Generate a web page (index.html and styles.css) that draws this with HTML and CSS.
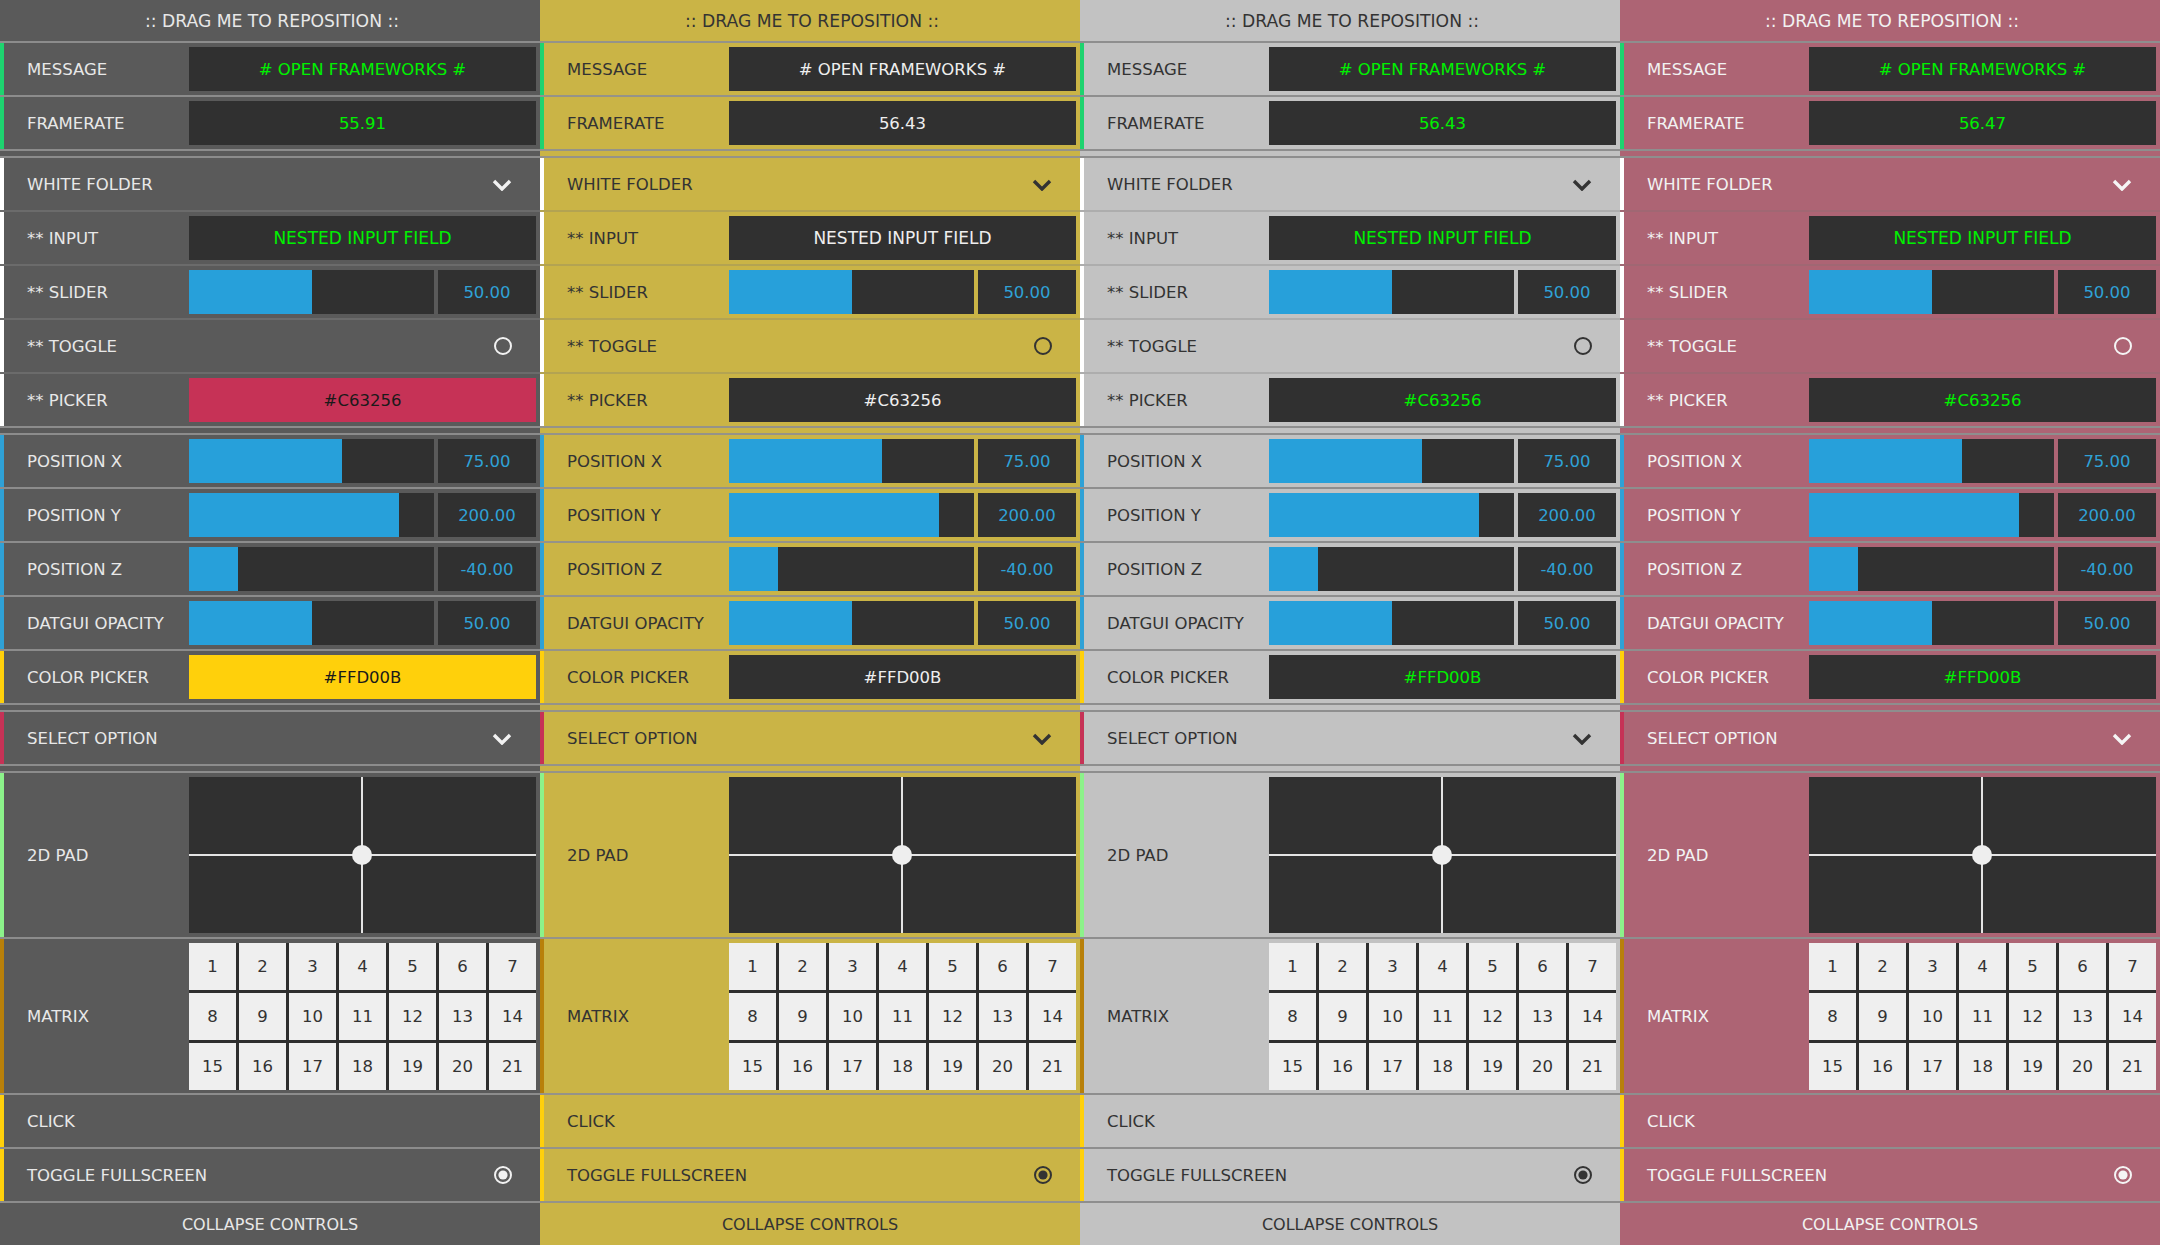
FILE: index.html
```html
<!DOCTYPE html>
<html>
<head>
<meta charset="utf-8">
<link rel="stylesheet" href="styles.css">
</head>
<body>
<div class="desk">

<!-- PANEL 1 -->
<div class="gui t1">
  <div class="hdr">:: DRAG ME TO REPOSITION ::</div>
  <div class="group">
    <div class="row s-green"><span class="lbl">MESSAGE</span><div class="box">#&nbsp;OPEN FRAMEWORKS #</div></div>
    <div class="row s-green"><span class="lbl">FRAMERATE</span><div class="box">55.91</div></div>
  </div>
  <div class="group folder">
    <div class="row s-white"><span class="lbl">WHITE FOLDER</span><svg class="ico chev" viewBox="0 0 20 12"><polyline points="2,2 10,10 18,2"/></svg></div>
    <div class="row s-white"><span class="lbl">** INPUT</span><div class="box wide">NESTED INPUT FIELD</div></div>
    <div class="row s-white"><span class="lbl">** SLIDER</span><div class="track"><div class="fill" style="width:50%"></div></div><div class="num">50.00</div></div>
    <div class="row s-white"><span class="lbl">** TOGGLE</span><svg class="ico tog" viewBox="0 0 20 20"><circle cx="10" cy="10" r="8"/></svg></div>
    <div class="row s-white"><span class="lbl">** PICKER</span><div class="box pick-red">#C63256</div></div>
  </div>
  <div class="group">
    <div class="row s-blue"><span class="lbl">POSITION X</span><div class="track"><div class="fill" style="width:62.4%"></div></div><div class="num">75.00</div></div>
    <div class="row s-blue"><span class="lbl">POSITION Y</span><div class="track"><div class="fill" style="width:85.7%"></div></div><div class="num">200.00</div></div>
    <div class="row s-blue"><span class="lbl">POSITION Z</span><div class="track"><div class="fill" style="width:19.8%"></div></div><div class="num">-40.00</div></div>
    <div class="row s-blue"><span class="lbl">DATGUI OPACITY</span><div class="track"><div class="fill" style="width:50%"></div></div><div class="num">50.00</div></div>
    <div class="row s-yellow"><span class="lbl">COLOR PICKER</span><div class="box pick-yel">#FFD00B</div></div>
  </div>
  <div class="group">
    <div class="row s-crimson"><span class="lbl">SELECT OPTION</span><svg class="ico chev" viewBox="0 0 20 12"><polyline points="2,2 10,10 18,2"/></svg></div>
  </div>
  <div class="group">
    <div class="row pad-row s-lime"><span class="lbl">2D PAD</span><div class="pad"><div class="hl"></div><div class="vl"></div><div class="dot"></div></div></div>
    <div class="row mat-row s-amber"><span class="lbl">MATRIX</span>
      <div class="matrix"><div>1</div><div>2</div><div>3</div><div>4</div><div>5</div><div>6</div><div>7</div><div>8</div><div>9</div><div>10</div><div>11</div><div>12</div><div>13</div><div>14</div><div>15</div><div>16</div><div>17</div><div>18</div><div>19</div><div>20</div><div>21</div></div>
    </div>
    <div class="row s-yellow"><span class="lbl">CLICK</span></div>
    <div class="row s-yellow"><span class="lbl">TOGGLE FULLSCREEN</span><svg class="ico tog" viewBox="0 0 20 20"><circle cx="10" cy="10" r="8"/><circle class="in" cx="10" cy="10" r="4.6"/></svg></div>
  </div>
  <div class="ftr">COLLAPSE CONTROLS</div>
</div>

<!-- PANEL 2 -->
<div class="gui t2">
  <div class="hdr">:: DRAG ME TO REPOSITION ::</div>
  <div class="group">
    <div class="row s-green"><span class="lbl">MESSAGE</span><div class="box">#&nbsp;OPEN FRAMEWORKS #</div></div>
    <div class="row s-green"><span class="lbl">FRAMERATE</span><div class="box">56.43</div></div>
  </div>
  <div class="group folder">
    <div class="row s-white"><span class="lbl">WHITE FOLDER</span><svg class="ico chev" viewBox="0 0 20 12"><polyline points="2,2 10,10 18,2"/></svg></div>
    <div class="row s-white"><span class="lbl">** INPUT</span><div class="box wide">NESTED INPUT FIELD</div></div>
    <div class="row s-white"><span class="lbl">** SLIDER</span><div class="track"><div class="fill" style="width:50%"></div></div><div class="num">50.00</div></div>
    <div class="row s-white"><span class="lbl">** TOGGLE</span><svg class="ico tog" viewBox="0 0 20 20"><circle cx="10" cy="10" r="8"/></svg></div>
    <div class="row s-white"><span class="lbl">** PICKER</span><div class="box">#C63256</div></div>
  </div>
  <div class="group">
    <div class="row s-blue"><span class="lbl">POSITION X</span><div class="track"><div class="fill" style="width:62.4%"></div></div><div class="num">75.00</div></div>
    <div class="row s-blue"><span class="lbl">POSITION Y</span><div class="track"><div class="fill" style="width:85.7%"></div></div><div class="num">200.00</div></div>
    <div class="row s-blue"><span class="lbl">POSITION Z</span><div class="track"><div class="fill" style="width:19.8%"></div></div><div class="num">-40.00</div></div>
    <div class="row s-blue"><span class="lbl">DATGUI OPACITY</span><div class="track"><div class="fill" style="width:50%"></div></div><div class="num">50.00</div></div>
    <div class="row s-yellow"><span class="lbl">COLOR PICKER</span><div class="box">#FFD00B</div></div>
  </div>
  <div class="group">
    <div class="row s-crimson"><span class="lbl">SELECT OPTION</span><svg class="ico chev" viewBox="0 0 20 12"><polyline points="2,2 10,10 18,2"/></svg></div>
  </div>
  <div class="group">
    <div class="row pad-row s-lime"><span class="lbl">2D PAD</span><div class="pad"><div class="hl"></div><div class="vl"></div><div class="dot"></div></div></div>
    <div class="row mat-row s-amber"><span class="lbl">MATRIX</span>
      <div class="matrix"><div>1</div><div>2</div><div>3</div><div>4</div><div>5</div><div>6</div><div>7</div><div>8</div><div>9</div><div>10</div><div>11</div><div>12</div><div>13</div><div>14</div><div>15</div><div>16</div><div>17</div><div>18</div><div>19</div><div>20</div><div>21</div></div>
    </div>
    <div class="row s-yellow"><span class="lbl">CLICK</span></div>
    <div class="row s-yellow"><span class="lbl">TOGGLE FULLSCREEN</span><svg class="ico tog" viewBox="0 0 20 20"><circle cx="10" cy="10" r="8"/><circle class="in" cx="10" cy="10" r="4.6"/></svg></div>
  </div>
  <div class="ftr">COLLAPSE CONTROLS</div>
</div>

<!-- PANEL 3 -->
<div class="gui t3">
  <div class="hdr">:: DRAG ME TO REPOSITION ::</div>
  <div class="group">
    <div class="row s-green"><span class="lbl">MESSAGE</span><div class="box">#&nbsp;OPEN FRAMEWORKS #</div></div>
    <div class="row s-green"><span class="lbl">FRAMERATE</span><div class="box">56.43</div></div>
  </div>
  <div class="group folder">
    <div class="row s-white"><span class="lbl">WHITE FOLDER</span><svg class="ico chev" viewBox="0 0 20 12"><polyline points="2,2 10,10 18,2"/></svg></div>
    <div class="row s-white"><span class="lbl">** INPUT</span><div class="box wide">NESTED INPUT FIELD</div></div>
    <div class="row s-white"><span class="lbl">** SLIDER</span><div class="track"><div class="fill" style="width:50%"></div></div><div class="num">50.00</div></div>
    <div class="row s-white"><span class="lbl">** TOGGLE</span><svg class="ico tog" viewBox="0 0 20 20"><circle cx="10" cy="10" r="8"/></svg></div>
    <div class="row s-white"><span class="lbl">** PICKER</span><div class="box">#C63256</div></div>
  </div>
  <div class="group">
    <div class="row s-blue"><span class="lbl">POSITION X</span><div class="track"><div class="fill" style="width:62.4%"></div></div><div class="num">75.00</div></div>
    <div class="row s-blue"><span class="lbl">POSITION Y</span><div class="track"><div class="fill" style="width:85.7%"></div></div><div class="num">200.00</div></div>
    <div class="row s-blue"><span class="lbl">POSITION Z</span><div class="track"><div class="fill" style="width:19.8%"></div></div><div class="num">-40.00</div></div>
    <div class="row s-blue"><span class="lbl">DATGUI OPACITY</span><div class="track"><div class="fill" style="width:50%"></div></div><div class="num">50.00</div></div>
    <div class="row s-yellow"><span class="lbl">COLOR PICKER</span><div class="box">#FFD00B</div></div>
  </div>
  <div class="group">
    <div class="row s-crimson"><span class="lbl">SELECT OPTION</span><svg class="ico chev" viewBox="0 0 20 12"><polyline points="2,2 10,10 18,2"/></svg></div>
  </div>
  <div class="group">
    <div class="row pad-row s-lime"><span class="lbl">2D PAD</span><div class="pad"><div class="hl"></div><div class="vl"></div><div class="dot"></div></div></div>
    <div class="row mat-row s-amber"><span class="lbl">MATRIX</span>
      <div class="matrix"><div>1</div><div>2</div><div>3</div><div>4</div><div>5</div><div>6</div><div>7</div><div>8</div><div>9</div><div>10</div><div>11</div><div>12</div><div>13</div><div>14</div><div>15</div><div>16</div><div>17</div><div>18</div><div>19</div><div>20</div><div>21</div></div>
    </div>
    <div class="row s-yellow"><span class="lbl">CLICK</span></div>
    <div class="row s-yellow"><span class="lbl">TOGGLE FULLSCREEN</span><svg class="ico tog" viewBox="0 0 20 20"><circle cx="10" cy="10" r="8"/><circle class="in" cx="10" cy="10" r="4.6"/></svg></div>
  </div>
  <div class="ftr">COLLAPSE CONTROLS</div>
</div>

<!-- PANEL 4 -->
<div class="gui t4">
  <div class="hdr">:: DRAG ME TO REPOSITION ::</div>
  <div class="group">
    <div class="row s-green"><span class="lbl">MESSAGE</span><div class="box">#&nbsp;OPEN FRAMEWORKS #</div></div>
    <div class="row s-green"><span class="lbl">FRAMERATE</span><div class="box">56.47</div></div>
  </div>
  <div class="group folder">
    <div class="row s-white"><span class="lbl">WHITE FOLDER</span><svg class="ico chev" viewBox="0 0 20 12"><polyline points="2,2 10,10 18,2"/></svg></div>
    <div class="row s-white"><span class="lbl">** INPUT</span><div class="box wide">NESTED INPUT FIELD</div></div>
    <div class="row s-white"><span class="lbl">** SLIDER</span><div class="track"><div class="fill" style="width:50%"></div></div><div class="num">50.00</div></div>
    <div class="row s-white"><span class="lbl">** TOGGLE</span><svg class="ico tog" viewBox="0 0 20 20"><circle cx="10" cy="10" r="8"/></svg></div>
    <div class="row s-white"><span class="lbl">** PICKER</span><div class="box">#C63256</div></div>
  </div>
  <div class="group">
    <div class="row s-blue"><span class="lbl">POSITION X</span><div class="track"><div class="fill" style="width:62.4%"></div></div><div class="num">75.00</div></div>
    <div class="row s-blue"><span class="lbl">POSITION Y</span><div class="track"><div class="fill" style="width:85.7%"></div></div><div class="num">200.00</div></div>
    <div class="row s-blue"><span class="lbl">POSITION Z</span><div class="track"><div class="fill" style="width:19.8%"></div></div><div class="num">-40.00</div></div>
    <div class="row s-blue"><span class="lbl">DATGUI OPACITY</span><div class="track"><div class="fill" style="width:50%"></div></div><div class="num">50.00</div></div>
    <div class="row s-yellow"><span class="lbl">COLOR PICKER</span><div class="box">#FFD00B</div></div>
  </div>
  <div class="group">
    <div class="row s-crimson"><span class="lbl">SELECT OPTION</span><svg class="ico chev" viewBox="0 0 20 12"><polyline points="2,2 10,10 18,2"/></svg></div>
  </div>
  <div class="group">
    <div class="row pad-row s-lime"><span class="lbl">2D PAD</span><div class="pad"><div class="hl"></div><div class="vl"></div><div class="dot"></div></div></div>
    <div class="row mat-row s-amber"><span class="lbl">MATRIX</span>
      <div class="matrix"><div>1</div><div>2</div><div>3</div><div>4</div><div>5</div><div>6</div><div>7</div><div>8</div><div>9</div><div>10</div><div>11</div><div>12</div><div>13</div><div>14</div><div>15</div><div>16</div><div>17</div><div>18</div><div>19</div><div>20</div><div>21</div></div>
    </div>
    <div class="row s-yellow"><span class="lbl">CLICK</span></div>
    <div class="row s-yellow"><span class="lbl">TOGGLE FULLSCREEN</span><svg class="ico tog" viewBox="0 0 20 20"><circle cx="10" cy="10" r="8"/><circle class="in" cx="10" cy="10" r="4.6"/></svg></div>
  </div>
  <div class="ftr">COLLAPSE CONTROLS</div>
</div>

</div>
</body>
</html>
```

FILE: styles.css
```css
html, body {
  margin: 0;
  padding: 0;
}
body {
  width: 2160px;
  height: 1245px;
  overflow: hidden;
  font-family: "DejaVu Sans", Verdana, sans-serif;
  font-size: 16.5px;
}
.desk {
  display: flex;
  width: 2160px;
  height: 1245px;
}

/* themes */
.t1 { --bg: #5a5a5a; --fg: #e8e8e8; --line: #8c8c8c; --line2: #6b6b6b; --box: #303030; --val: #00f000; --ico: #f2f2f2; }
.t2 { --bg: #cab446; --fg: #333333; --line: #959389; --line2: #b3a352; --box: #303030; --val: #eeeeee; --ico: #333333; }
.t3 { --bg: #c2c2c2; --fg: #333333; --line: #8e8e8e; --line2: #adadad; --box: #303030; --val: #00f000; --ico: #333333; }
.t4 { --bg: #ad6474; --fg: #f2f2f2; --line: #8e8e8e; --line2: #a06773; --box: #303030; --val: #00f000; --ico: #f5f5f5; }

.gui {
  width: 540px;
  height: 1245px;
  display: flex;
  flex-direction: column;
  background: var(--bg);
  color: var(--fg);
  flex: none;
}
.hdr {
  height: 41px;
  display: flex;
  align-items: center;
  justify-content: center;
  font-size: 17.2px;
  padding-left: 4px;
}
.ftr {
  flex: 1;
  display: flex;
  align-items: center;
  justify-content: center;
  font-size: 16px;
}
.group {
  border-top: 2px solid var(--line);
}
.group + .group {
  margin-top: 5px;
}
.row {
  height: 52px;
  border-bottom: 2px solid var(--line);
  display: flex;
  align-items: center;
  padding: 0 4px 0 27px;
  box-shadow: inset 4px 0 0 var(--stripe);
}
.folder .row {
  border-bottom-color: var(--line2);
}
.folder .row:last-child {
  border-bottom-color: var(--line);
}
.s-green { --stripe: #1ed36f; }
.s-white { --stripe: #ffffff; }
.s-blue { --stripe: #2fa1d6; }
.s-yellow { --stripe: #ffd00b; }
.s-crimson { --stripe: #c63256; }
.s-lime { --stripe: #8cf28a; }
.s-amber { --stripe: #b8800a; }

.lbl {
  width: 162px;
  flex: none;
  white-space: nowrap;
}
.box {
  flex: 1;
  height: 44px;
  background: var(--box);
  color: var(--val);
  display: flex;
  align-items: center;
  justify-content: center;
  white-space: nowrap;
}
.box.wide {
  font-size: 17px;
}
.pick-red {
  background: #c63256;
  color: #1a1a1a;
}
.pick-yel {
  background: #ffd00b;
  color: #1a1a1a;
}
.track {
  width: 245px;
  height: 44px;
  flex: none;
  background: var(--box);
  display: flex;
}
.fill {
  height: 100%;
  background: #27a0da;
}
.num {
  flex: 1;
  margin-left: 4px;
  height: 44px;
  background: var(--box);
  color: #2fa1d6;
  display: flex;
  align-items: center;
  justify-content: center;
}
.ico {
  margin-left: auto;
  margin-right: 24px;
  flex: none;
}
.chev {
  width: 20px;
  height: 12px;
  margin-top: 2px;
}
.chev polyline {
  fill: none;
  stroke: var(--ico);
  stroke-width: 3.4;
  stroke-linecap: butt;
  stroke-linejoin: miter;
}
.tog {
  width: 20px;
  height: 20px;
  margin-right: 23px;
}
.tog circle {
  fill: none;
  stroke: var(--ico);
  stroke-width: 2;
}
.tog circle.in {
  fill: var(--ico);
  stroke: none;
}

/* 2D pad */
.pad-row {
  height: 164px;
}
.pad {
  flex: 1;
  height: 156px;
  background: var(--box);
  position: relative;
}
.pad .hl {
  position: absolute;
  left: 0;
  right: 0;
  top: 77px;
  height: 2px;
  background: #e4e4e4;
}
.pad .vl {
  position: absolute;
  top: 0;
  bottom: 0;
  left: 172px;
  width: 2px;
  background: #e4e4e4;
}
.pad .dot {
  position: absolute;
  left: 163px;
  top: 68px;
  width: 20px;
  height: 20px;
  border-radius: 50%;
  background: #eeeeee;
}

/* matrix */
.mat-row {
  height: 154px;
}
.matrix {
  flex: 1;
  align-self: flex-start;
  margin-top: 4px;
  display: grid;
  grid-template-columns: repeat(7, 1fr);
  grid-auto-rows: 47px;
  gap: 3px;
  background: #2e2e2e;
}
.matrix div {
  background: #efefef;
  color: #333333;
  display: flex;
  align-items: center;
  justify-content: center;
}
```
